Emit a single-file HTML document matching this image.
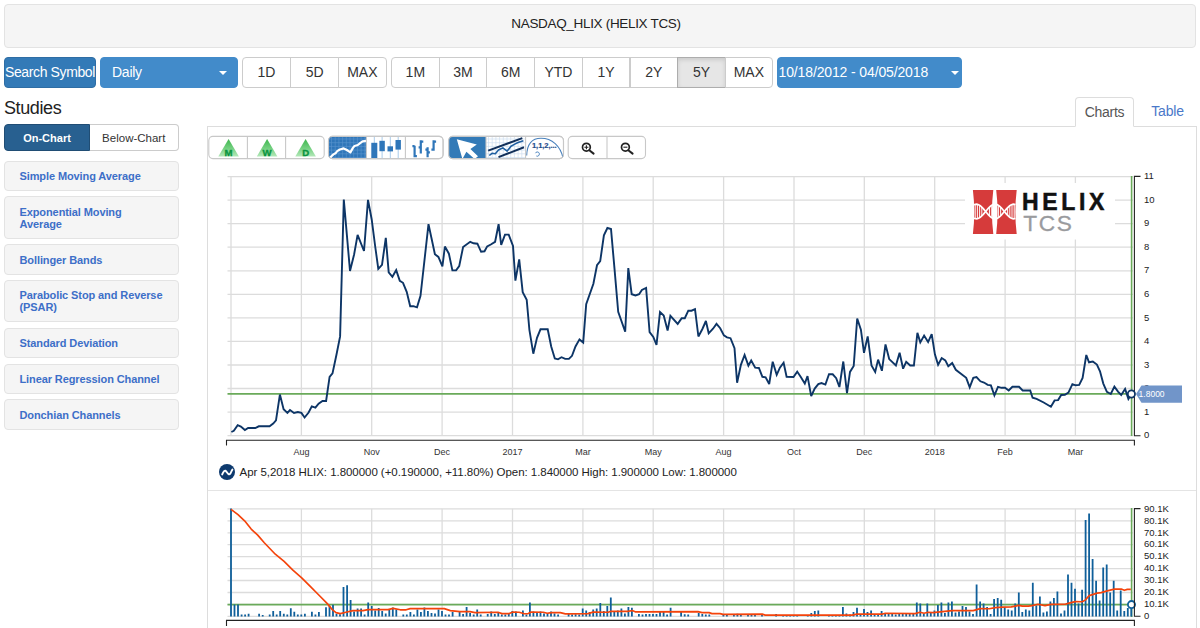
<!DOCTYPE html>
<html><head><meta charset="utf-8">
<style>
*{box-sizing:border-box}
html,body{margin:0;padding:0}
body{width:1200px;height:628px;overflow:hidden;background:#fff;font-family:"Liberation Sans",sans-serif;color:#333;position:relative;font-size:14px}
.abs{position:absolute}
.title{left:4px;top:4px;width:1192px;height:44px;background:#f5f5f5;border:1px solid #e3e3e3;border-radius:4px;text-align:center;line-height:37px;font-size:13.5px;letter-spacing:-0.32px;color:#222;padding-right:8px}
.btn{position:absolute;top:57px;height:31px;line-height:29px;font-size:14px;text-align:center;border:1px solid #ccc;background:#fff;color:#333}
.bl{background:#337ab7;border-color:#2e6da4;color:#fff;border-radius:4px}
.dd{background:#428bca;border-color:#428bca;color:#fff;border-radius:4px;text-align:left;padding-left:11px}
.caret{position:absolute;width:0;height:0;border-left:4px solid transparent;border-right:4px solid transparent;border-top:4px solid #fff}
h2{position:absolute;margin:0;left:4px;top:97px;font-size:18px;letter-spacing:-0.4px;font-weight:normal;color:#222;line-height:22px}
.study{position:absolute;left:4px;width:175px;height:30.8px;background:#f5f5f5;border:1px solid #e3e3e3;border-radius:4px;color:#3d6fc8;font-size:11px;font-weight:bold;padding:9.5px 0 0 14.5px;line-height:11.8px;letter-spacing:-0.1px}
.study.two{height:42.6px}
.tgl{position:absolute;top:123.5px;height:27.5px;line-height:26px;font-size:11px;text-align:center}
.panel{left:207px;top:126px;width:990px;height:520px;border:1px solid #ddd;border-radius:0}
.tab{position:absolute;top:97px;height:30px;line-height:28px;font-size:14px;text-align:center}
.tb{position:absolute;top:136.3px;height:22.4px;border:1px solid #ccc;background:#fff;overflow:hidden}
</style></head><body>
<div class="abs title">NASDAQ_HLIX (HELIX TCS)</div>

<div class="btn bl" style="left:4px;width:92px;font-size:14px;white-space:nowrap;overflow:hidden;padding:0;letter-spacing:-0.38px">Search Symbol</div>
<div class="btn dd" style="left:100px;width:138px;font-size:14px;letter-spacing:-0.26px">Daily<span class="caret" style="right:10px;top:13px"></span></div>

<div class="btn" style="left:241.8px;width:49.2px;border-radius:4px 0 0 4px">1D</div>
<div class="btn" style="left:290px;width:49.2px">5D</div>
<div class="btn" style="left:338.2px;width:48.4px;border-radius:0 4px 4px 0">MAX</div>

<div class="btn" style="left:391px;width:48.7px;border-radius:4px 0 0 4px">1M</div>
<div class="btn" style="left:438.7px;width:48.7px">3M</div>
<div class="btn" style="left:486.4px;width:48.7px">6M</div>
<div class="btn" style="left:534.1px;width:48.7px">YTD</div>
<div class="btn" style="left:581.8px;width:48.7px">1Y</div>
<div class="btn" style="left:629.5px;width:48.7px">2Y</div>
<div class="btn" style="left:677.2px;width:48.7px;background:#e6e6e6;border-color:#adadad;box-shadow:inset 0 2px 4px rgba(0,0,0,.12)">5Y</div>
<div class="btn" style="left:724.9px;width:47.9px;border-radius:0 4px 4px 0">MAX</div>
<div class="btn dd" style="left:777px;width:185px;padding-left:0.5px;letter-spacing:-0.13px">10/18/2012 - 04/05/2018<span class="caret" style="right:2px;top:13px"></span></div>

<h2>Studies</h2>
<div class="tgl" style="left:4px;width:86px;background:#286090;border:1px solid #204d74;border-radius:4px 0 0 4px;color:#fff;font-weight:bold">On-Chart</div>
<div class="tgl" style="left:90px;width:88.5px;background:#fff;border:1px solid #ccc;border-left:0;border-radius:0 4px 4px 0;color:#333;font-size:11.5px">Below-Chart</div>

<div class="study" style="top:160.5px">Simple Moving Average</div>
<div class="study two" style="top:196.3px">Exponential Moving<br>Average</div>
<div class="study" style="top:244.1px">Bollinger Bands</div>
<div class="study two" style="top:279.9px">Parabolic Stop and Reverse<br>(PSAR)</div>
<div class="study" style="top:327.7px">Standard Deviation</div>
<div class="study" style="top:363.5px">Linear Regression Channel</div>
<div class="study" style="top:399.3px">Donchian Channels</div>

<div class="abs panel"></div>
<div class="tab" style="left:1075px;width:59px;border:1px solid #ddd;border-bottom:1px solid #fff;border-radius:4px 4px 0 0;background:#fff;color:#555;letter-spacing:-0.28px">Charts</div>
<div class="tab" style="left:1138px;width:59px;color:#4a78c9;letter-spacing:-0.2px">Table</div>
<div class="abs" style="left:208px;top:490px;width:988px;height:1px;background:#e4e4e4"></div>

<svg class="abs" style="left:0;top:0" width="1200" height="628" viewBox="0 0 1200 628" font-family="Liberation Sans, sans-serif">
<defs><linearGradient id="tg" x1="0" y1="0" x2="0" y2="1"><stop offset="0" stop-color="#3db54d"/><stop offset=".55" stop-color="#76d182"/><stop offset="1" stop-color="#b4e8ba"/></linearGradient>
<clipPath id="c2"><rect x="328.5" y="136.4" width="114.6" height="22.2" rx="4"/></clipPath>
<clipPath id="c3"><rect x="448.7" y="136.4" width="114.8" height="22.2" rx="4"/></clipPath></defs>
<rect x="208.8" y="136.4" width="115.4" height="22.2" rx="4" fill="#fff" stroke="#c8c8c8" stroke-width="1.1"/>
<path d="M228.6 138.9L238.9 156.6H218.3Z" fill="url(#tg)"/>
<text x="228.6" y="156" font-size="9.6" font-weight="bold" fill="#0a9440" stroke="#0a9440" stroke-width=".35" text-anchor="middle">M</text>
<path d="M267.1 138.9L277.4 156.6H256.8Z" fill="url(#tg)"/>
<text x="267.1" y="156" font-size="9.6" font-weight="bold" fill="#0a9440" stroke="#0a9440" stroke-width=".35" text-anchor="middle">W</text>
<path d="M305.6 138.9L315.9 156.6H295.3Z" fill="url(#tg)"/>
<text x="305.6" y="156" font-size="9.6" font-weight="bold" fill="#0a9440" stroke="#0a9440" stroke-width=".35" text-anchor="middle">D</text>
<path d="M247.4 136.4V158.6M285.6 136.4V158.6" stroke="#c8c8c8" stroke-width="1.1"/>
<rect x="328.5" y="136.4" width="114.6" height="22.2" rx="4" fill="#fff" stroke="#c8c8c8" stroke-width="1.1"/>
<g clip-path="url(#c2)">
<rect x="328.5" y="136.4" width="37.9" height="22.2" fill="#2f76b9"/>
<path d="M331.5 136.4V158.6M335.2 136.4V158.6M338.9 136.4V158.6M342.6 136.4V158.6M346.3 136.4V158.6M350 136.4V158.6M353.7 136.4V158.6M357.4 136.4V158.6M361.1 136.4V158.6M364.8 136.4V158.6M328.5 139H366.4M328.5 142.7H366.4M328.5 146.4H366.4M328.5 150.1H366.4M328.5 153.8H366.4M328.5 157.5H366.4" stroke="#5a95cf" stroke-width=".6" fill="none"/>
<polyline points="329.8,158.4 331.2,156.5 333.4,154.4 335.5,153.3 337.2,151.1 339.9,149.5 343.7,148.4 346.9,150 350.4,152.4 352.9,147.9 354.5,146 357.8,145 360.5,142.8 362.6,141.4 366.4,140.8" fill="none" stroke="#fff" stroke-width="2.2" stroke-linejoin="round"/>
<path d="M374.3 136.4V158.6M382.1 136.4V158.6M390.3 136.4V158.6M398.2 136.4V158.6" stroke="#a9cbea" stroke-width="1"/>
<rect x="371.3" y="142.8" width="6" height="16" fill="#2f76b9"/><rect x="379.4" y="140.8" width="5.4" height="10.4" fill="#2f76b9"/><rect x="387.5" y="146.3" width="5.5" height="5.1" fill="#2f76b9"/><rect x="395.5" y="140" width="5.4" height="9.6" fill="#2f76b9"/>
<path d="M414.6 145.7V157.2M412.4 146.2H414.6M414.6 156.2H416.9M420.8 140.3V153.4M418.6 147.3H420.8M420.8 141.6H423.3M427.6 147.3V157.2M425.4 149.6H427.6M427.6 152.3H429.9M433.6 140.3V150.7M431.4 149.6H433.6M433.6 141.6H436.1" stroke="#2f76b9" stroke-width="2.2" fill="none"/>
</g>
<path d="M366.4 136.4V158.6M405.4 136.4V158.6" stroke="#c8c8c8" stroke-width="1.1"/>
<rect x="328.5" y="136.4" width="114.6" height="22.2" rx="4" fill="none" stroke="#c8c8c8" stroke-width="1.1"/>
<rect x="448.7" y="136.4" width="114.8" height="22.2" rx="4" fill="#fff" stroke="#c8c8c8" stroke-width="1.1"/>
<g clip-path="url(#c3)">
<rect x="448.7" y="136.4" width="37.3" height="22.2" fill="#337ab7"/>
<path d="M456.8 139.2L476.8 144.6L470.4 149L478 156.2L474.6 159L466.4 151.7L462.4 159Z" fill="#fff"/>
<path d="M488.5 136.4V158.6M492.2 136.4V158.6M495.9 136.4V158.6M499.6 136.4V158.6M503.3 136.4V158.6M507 136.4V158.6M510.7 136.4V158.6M514.4 136.4V158.6M518.1 136.4V158.6M521.8 136.4V158.6M486 139H525.6M486 142.7H525.6M486 146.4H525.6M486 150.1H525.6M486 153.8H525.6M486 157.5H525.6" stroke="#cfe0f1" stroke-width=".7" fill="none"/>
<polyline points="489.3,155.5 492,153.3 495.3,153.8 498.5,150 502.8,147.9 507.2,151.1 511,146.3 514.8,144.1 518,142.5 523.4,140.8" fill="none" stroke="#1f5fa0" stroke-width="1.6" stroke-linejoin="round"/>
<path d="M488.2 150.6L522.3 138.1M498.5 157.1L524 147.3" stroke="#12305a" stroke-width="2" fill="none"/>
<path d="M526.7 155.5C527 146 531 138.3 541 138.3C552 138.3 560.5 146 563 158" fill="none" stroke="#4a82bd" stroke-width="1.1"/>
<path d="M535.5 153.2C535.8 151.6 538.8 151.4 539.3 153.4C539.8 155.6 537.6 156.8 536.4 156" fill="none" stroke="#4a82bd" stroke-width="1"/>
<text x="532" y="148.2" font-size="7.6" font-weight="bold" fill="#1f4e8c" stroke="#1f4e8c" stroke-width=".2" letter-spacing="-0.1">1,1,2,...</text>
</g>
<path d="M486 136.4V158.6M525.6 136.4V158.6" stroke="#c8c8c8" stroke-width="1.1"/>
<rect x="448.7" y="136.4" width="114.8" height="22.2" rx="4" fill="none" stroke="#c8c8c8" stroke-width="1.1"/>
<rect x="568.2" y="136.4" width="77.3" height="22.2" rx="4" fill="#fff" stroke="#c8c8c8" stroke-width="1.1"/>
<path d="M607 136.4V158.6" stroke="#c8c8c8" stroke-width="1.1"/>
<circle cx="586.4" cy="147.2" r="3.9" fill="none" stroke="#222" stroke-width="1.7"/>
<path d="M589.3 150.2L593.6 153.6" stroke="#222" stroke-width="2" stroke-linecap="round"/>
<path d="M584.4 147.2H588.4M586.4 145.2V149.2" stroke="#222" stroke-width="1.1"/>
<circle cx="625.4" cy="147.2" r="3.9" fill="none" stroke="#222" stroke-width="1.7"/>
<path d="M628.3 150.2L632.6 153.6" stroke="#222" stroke-width="2" stroke-linecap="round"/>
<path d="M623.4 147.2H627.4" stroke="#222" stroke-width="1.1"/>
</svg>
<svg class="abs" style="left:0;top:0" width="1200" height="628" viewBox="0 0 1200 628" font-family="Liberation Sans, sans-serif">
<g stroke="#dcdcdc" stroke-width="1.3" fill="none">
<path d="M227.5 435.6H1133"/>
<path d="M227.5 412.1H1133"/>
<path d="M227.5 388.5H1133"/>
<path d="M227.5 365.0H1133"/>
<path d="M227.5 341.4H1133"/>
<path d="M227.5 317.9H1133"/>
<path d="M227.5 294.3H1133"/>
<path d="M227.5 270.8H1133"/>
<path d="M227.5 247.2H1133"/>
<path d="M227.5 223.7H1133"/>
<path d="M227.5 200.1H1133"/>
<path d="M227.5 176.6H1133"/>
<path d="M231.0 176.5V435.6"/>
<path d="M301.4 176.5V435.6"/>
<path d="M371.7 176.5V435.6"/>
<path d="M442.1 176.5V435.6"/>
<path d="M512.5 176.5V435.6"/>
<path d="M582.9 176.5V435.6"/>
<path d="M653.2 176.5V435.6"/>
<path d="M723.6 176.5V435.6"/>
<path d="M794.0 176.5V435.6"/>
<path d="M864.3 176.5V435.6"/>
<path d="M934.7 176.5V435.6"/>
<path d="M1005.1 176.5V435.6"/>
<path d="M1075.4 176.5V435.6"/>
</g>
<rect x="965" y="183" width="150" height="56.5" fill="#fff"/>
<path d="M972.9 190H993.3Q990.6 212 993.3 234H972.9Q975.6 212 972.9 190Z" fill="#d63b3b"/>
<path d="M996.2 190H1016.7Q1014 212 1016.7 234H996.2Q998.9 212 996.2 190Z" fill="#d63b3b"/>
<path d="M975.2 204.3V218.7M977.4 204.3V218.7M979.6 205.3V217.7M981.8 207.1V215.9M989.5 207.1V215.9M991.7 205.3V217.7M994.0 204.3V218.7M996.2 204.3V218.7M998.4 205.4V217.6M1000.6 207.2V215.8M1007.6 207.7V215.3M1009.8 205.7V217.3M1012.0 204.5V218.5M1014.2 204.2V218.8" stroke="#fff" stroke-width="1.1" fill="none" opacity=".9"/>
<polyline points="973.5,205.0 974.5,204.5 975.5,204.3 976.5,204.2 977.5,204.3 978.5,204.7 979.5,205.2 980.5,205.9 981.5,206.8 982.5,207.8 983.5,208.9 984.5,210.1 985.5,211.3 986.5,212.5 987.5,213.7 988.5,214.9 989.5,215.9 990.5,216.8 991.5,217.6 992.5,218.2 993.5,218.6 994.5,218.8 995.5,218.8 996.5,218.6 997.5,218.2 998.5,217.6 999.5,216.8 1000.5,215.9 1001.5,214.9 1002.5,213.7 1003.5,212.5 1004.5,211.3 1005.5,210.1 1006.5,208.9 1007.5,207.8 1008.5,206.8 1009.5,205.9 1010.5,205.2 1011.5,204.7 1012.5,204.3 1013.5,204.2 1014.5,204.3 1015.5,204.5" fill="none" stroke="#fff" stroke-width="1.7"/>
<polyline points="973.5,218.0 974.5,218.5 975.5,218.7 976.5,218.8 977.5,218.7 978.5,218.3 979.5,217.8 980.5,217.1 981.5,216.2 982.5,215.2 983.5,214.1 984.5,212.9 985.5,211.7 986.5,210.5 987.5,209.3 988.5,208.1 989.5,207.1 990.5,206.2 991.5,205.4 992.5,204.8 993.5,204.4 994.5,204.2 995.5,204.2 996.5,204.4 997.5,204.8 998.5,205.4 999.5,206.2 1000.5,207.1 1001.5,208.1 1002.5,209.3 1003.5,210.5 1004.5,211.7 1005.5,212.9 1006.5,214.1 1007.5,215.2 1008.5,216.2 1009.5,217.1 1010.5,217.8 1011.5,218.3 1012.5,218.7 1013.5,218.8 1014.5,218.7 1015.5,218.5" fill="none" stroke="#fff" stroke-width="1.7"/>
<text x="1021.9" y="210" font-size="23" font-weight="bold" fill="#111" stroke="#111" stroke-width=".5" letter-spacing="3.7">HELIX</text>
<text x="1023.2" y="230.6" font-size="22.7" fill="#9a9b9e" stroke="#9a9b9e" stroke-width=".3" letter-spacing="1.6">TCS</text>
<path d="M227.5 393.9H1133" stroke="#6aaa5a" stroke-width="1.6" fill="none"/>
<path d="M1131.6 176V436" stroke="#6aaa5a" stroke-width="1.6" fill="none"/>
<path d="M226.5 445.5V440.2H1134.4V445.5" stroke="#222" stroke-width="1.1" fill="none"/>
<path d="M1140.5 176.4H1134.4V435.8H1140.5" stroke="#222" stroke-width="1.1" fill="none"/>
<g font-size="9.5" fill="#222">
<text x="1144" y="438.3">0</text>
<text x="1144" y="414.8">1</text>
<text x="1144" y="391.2">2</text>
<text x="1144" y="367.7">3</text>
<text x="1144" y="344.1">4</text>
<text x="1144" y="320.6">5</text>
<text x="1144" y="297.0">6</text>
<text x="1144" y="273.4">7</text>
<text x="1144" y="249.9">8</text>
<text x="1144" y="226.3">9</text>
<text x="1144" y="202.8">10</text>
<text x="1144" y="179.2">11</text>
</g>
<g font-size="9" fill="#333" text-anchor="middle">
<text x="301.4" y="455.1">Aug</text>
<text x="371.7" y="455.1">Nov</text>
<text x="442.1" y="455.1">Dec</text>
<text x="512.5" y="455.1">2017</text>
<text x="582.9" y="455.1">Mar</text>
<text x="653.2" y="455.1">May</text>
<text x="723.6" y="455.1">Aug</text>
<text x="794.0" y="455.1">Oct</text>
<text x="864.3" y="455.1">Dec</text>
<text x="934.7" y="455.1">2018</text>
<text x="1005.1" y="455.1">Feb</text>
<text x="1075.4" y="455.1">Mar</text>
</g>
<polyline fill="none" stroke="#0d3566" stroke-width="1.9" stroke-linejoin="miter" stroke-miterlimit="3" points="231.4,432.0 233.8,430.8 237.7,425.2 240.9,426.5 244.9,430 248.1,428 255.3,428 258.8,426.3 269.6,426.3 273.2,423.6 276,420.4 279.9,394.6 283.6,409.3 287.4,412.9 290,410 294,412.9 297.9,412 301.4,412.9 304.6,417.5 308.6,412.5 311.8,406.4 315.4,407.7 318.6,403.7 322.5,401 326.1,401 329.6,376.9 332.5,373.4 336.4,355 340.1,336.4 343.8,199.6 350,270.9 354.1,254.5 357.6,234.9 364,251 368,199.9 371.7,219.5 375.2,246.5 378.3,268.8 382,264.8 385.8,237.8 388.7,272.3 392.4,276.8 396.2,270.1 399.8,280.8 403,282.8 406.7,291.8 410.2,306.2 413.4,306.2 417,307.3 420.5,295.8 428.5,224.2 431.4,237.8 434.9,254.2 438.4,256.9 442.4,266.4 444.9,246.5 448.9,253.7 452.4,270.4 456.1,270.4 459.2,266.1 463.1,247 470.2,241.8 473.6,243.3 477.4,243.7 481.1,251.8 484.5,251.3 487.2,246.4 490.8,244.5 495.1,241.8 498.6,224.2 501.2,244.9 505,234.6 508.7,234.6 513,246 515.4,280.6 519.2,259.3 522.7,292.2 526.7,299.7 529.4,329.8 533.3,353.7 537,337.8 540.5,329.3 547.7,329.3 551.2,346.5 554.8,358.5 558,359.3 561.5,357.2 565.2,358.9 568.9,358.9 572,355.8 575.5,346.5 579.5,339.4 583.2,342.5 586.2,304.1 593.4,283.8 597,265.2 600.2,261.2 603.9,235.4 607.4,228 611,229 614.6,269.9 618.2,311.8 625.2,331.7 628.3,268.1 631.7,294.2 635.5,295.4 639.1,294.2 641.9,289.9 646.1,287.9 649.6,332.2 653.3,337 656.5,344.9 660,312 663.7,315.5 667.6,330.6 670.4,315.8 677.7,323.9 681.7,318.2 684.8,318.2 688.3,310.7 691.5,310.7 695,309.1 698.4,336.5 702.4,329 705.9,321 708.7,333.3 713,328.7 716.5,323.9 720.2,328.2 723.9,335.4 727,337.3 730.5,338.2 734.5,348.1 737.1,382.7 740.9,364.8 744.6,355 748.4,365.6 751.2,360.5 755.2,367.7 758.9,368 762.4,376.8 765.6,377.3 769.2,384 772.7,361.7 776.7,374.9 779.9,367.7 783.6,362.8 786.6,376.8 793.5,377 797.2,371.6 800.8,377.1 804.8,383.5 807.5,376.2 811.2,396.2 814.7,388.6 818.3,384.1 821.5,383 825.4,384.6 829,374.3 832.7,374.3 836.2,378.2 839.4,387 843.3,361.5 847,393.1 850,371.9 853.7,366 857.2,318.5 860.9,329.7 864,352.8 867.7,336.4 871.5,365.5 875.2,371.9 878.1,359.6 881.9,370.8 885.5,344.5 889.2,359.1 895.9,365.5 899.6,352.8 903.1,368.7 906.2,361.8 910.2,365.5 913.9,365.5 917.4,332.9 920.3,342.4 924.1,335.6 928.1,342.1 931.7,334.1 934.9,354.4 938.1,364.7 941.7,358 945.3,360.4 948.3,366.3 952.2,363 955.8,369.8 966.2,377.8 969.7,387.3 973.3,377.8 976.5,377 980.4,381.3 984,382.5 987.7,384.9 990.9,385.4 994.4,395.3 998,386.8 1001.5,387.8 1005,387.8 1008.7,390.5 1012.4,386.8 1019,386.8 1022.7,390.5 1030.2,390.5 1032.6,397.7 1036.6,398.8 1043.7,402.5 1050.9,406.8 1054.6,400.4 1058.1,400.1 1061.2,395 1064.9,394.8 1068.4,392.6 1072.4,384.1 1075.6,385.3 1079.2,384.9 1082.6,378 1086.3,355 1089,362.3 1092.8,361.6 1096.9,364.6 1100,371.3 1103.3,383.6 1106.9,391.9 1110.8,394 1114.4,386.6 1118,391.6 1121.2,394.9 1125.1,389 1128.4,398.9 1131.3,394"/>
<circle cx="1131.4" cy="394" r="3.6" fill="#fff" stroke="#0d3566" stroke-width="1.8"/>
<path d="M1136 394L1141.5 385.4H1182V402.7H1141.5Z" fill="#7195c9"/>
<text x="1138.6" y="397.2" font-size="8.5" fill="#fff">1.8000</text>
<g stroke="#dcdcdc" stroke-width="1.3" fill="none">
<path d="M227.5 616.4H1133"/>
<path d="M227.5 604.4H1133"/>
<path d="M227.5 592.5H1133"/>
<path d="M227.5 580.5H1133"/>
<path d="M227.5 568.6H1133"/>
<path d="M227.5 556.6H1133"/>
<path d="M227.5 544.7H1133"/>
<path d="M227.5 532.8H1133"/>
<path d="M227.5 520.8H1133"/>
<path d="M227.5 508.8H1133"/>
<path d="M231.0 508.7V616.4"/>
<path d="M301.4 508.7V616.4"/>
<path d="M371.7 508.7V616.4"/>
<path d="M442.1 508.7V616.4"/>
<path d="M512.5 508.7V616.4"/>
<path d="M582.9 508.7V616.4"/>
<path d="M653.2 508.7V616.4"/>
<path d="M723.6 508.7V616.4"/>
<path d="M794.0 508.7V616.4"/>
<path d="M864.3 508.7V616.4"/>
<path d="M934.7 508.7V616.4"/>
<path d="M1005.1 508.7V616.4"/>
<path d="M1075.4 508.7V616.4"/>
</g>
<path d="M227.5 604.6H1133" stroke="#6aaa5a" stroke-width="1.6" fill="none"/>
<path d="M1131.6 508V617" stroke="#6aaa5a" stroke-width="1.6" fill="none"/>
<path d="M231.0 616.4V508.4M234.5 616.4V604.4M238.0 616.4V604.4M241.6 616.4V614.5M245.1 616.4V614.5M248.6 616.4V613.8M259.1 616.4V613.8M262.7 616.4V614.9M269.7 616.4V614.5M273.2 616.4V611.1M276.7 616.4V614.5M280.2 616.4V611.1M283.8 616.4V613.8M287.3 616.4V614.5M290.8 616.4V608.3M294.3 616.4V611.8M297.8 616.4V614.5M301.3 616.4V614.5M304.9 616.4V613.8M311.9 616.4V611.8M315.4 616.4V614.5M318.9 616.4V612.0M326.0 616.4V607.3M329.5 616.4V605.8M333.0 616.4V604.8M336.5 616.4V613.8M340.0 616.4V614.2M343.5 616.4V587.0M347.1 616.4V585.3M350.6 616.4V599.9M354.1 616.4V611.4M357.6 616.4V608.4M361.1 616.4V608.4M364.6 616.4V614.6M368.2 616.4V602.4M371.7 616.4V605.9M375.2 616.4V610.4M378.7 616.4V607.9M382.2 616.4V610.9M385.7 616.4V613.4M389.3 616.4V609.9M392.8 616.4V607.4M396.3 616.4V609.4M403.3 616.4V614.6M406.8 616.4V614.6M410.4 616.4V611.9M413.9 616.4V614.6M417.4 616.4V609.4M420.9 616.4V611.9M424.4 616.4V607.4M427.9 616.4V610.9M431.5 616.4V612.9M435.0 616.4V613.6M438.5 616.4V609.4M442.0 616.4V610.9M445.5 616.4V614.6M449.0 616.4V614.6M452.6 616.4V611.9M459.6 616.4V611.9M463.1 616.4V613.9M466.6 616.4V606.9M470.1 616.4V612.9M473.7 616.4V614.6M477.2 616.4V609.4M480.7 616.4V614.6M487.7 616.4V613.9M491.2 616.4V611.4M494.8 616.4V613.9M498.3 616.4V612.9M501.8 616.4V614.6M505.3 616.4V614.6M508.8 616.4V613.9M512.3 616.4V610.9M515.9 616.4V611.4M522.9 616.4V610.4M526.4 616.4V614.6M529.9 616.4V602.4M533.4 616.4V611.4M537.0 616.4V612.4M540.5 616.4V611.4M544.0 616.4V613.4M547.5 616.4V612.9M551.0 616.4V611.4M554.5 616.4V613.4M558.1 616.4V614.6M568.6 616.4V613.9M572.1 616.4V614.6M575.6 616.4V614.2M579.2 616.4V614.6M582.7 616.4V608.4M586.2 616.4V610.4M589.7 616.4V611.9M593.2 616.4V609.4M596.7 616.4V608.4M600.3 616.4V602.9M603.8 616.4V610.9M607.3 616.4V605.9M610.8 616.4V597.6M614.3 616.4V611.9M617.8 616.4V610.4M621.4 616.4V608.4M624.9 616.4V613.4M628.4 616.4V606.9M631.9 616.4V607.7M638.9 616.4V613.9M642.5 616.4V614.6M646.0 616.4V613.9M649.5 616.4V613.9M653.0 616.4V613.9M656.5 616.4V613.9M660.0 616.4V611.9M663.6 616.4V611.9M667.1 616.4V614.6M670.6 616.4V607.7M681.1 616.4V611.9M684.7 616.4V614.2M688.2 616.4V614.6M698.7 616.4V612.9M702.3 616.4V613.9M705.8 616.4V614.6M709.3 616.4V614.6M723.4 616.4V614.8M726.9 616.4V614.8M733.9 616.4V614.8M737.4 616.4V613.8M740.9 616.4V614.8M748.0 616.4V614.8M751.5 616.4V614.8M755.0 616.4V614.8M762.0 616.4V614.8M776.1 616.4V613.9M783.1 616.4V615.2M786.7 616.4V615.2M790.2 616.4V615.2M793.7 616.4V615.2M797.2 616.4V615.2M807.8 616.4V614.9M811.3 616.4V612.9M814.8 616.4V611.1M818.3 616.4V610.4M828.9 616.4V615.1M832.4 616.4V615.1M835.9 616.4V615.1M839.4 616.4V615.1M842.9 616.4V606.9M846.4 616.4V613.6M850.0 616.4V614.6M853.5 616.4V611.9M857.0 616.4V607.7M860.5 616.4V613.9M864.0 616.4V608.9M867.5 616.4V611.9M871.1 616.4V610.4M874.6 616.4V613.9M878.1 616.4V613.9M881.6 616.4V611.1M885.1 616.4V613.9M888.6 616.4V613.9M892.2 616.4V613.9M895.7 616.4V614.6M899.2 616.4V613.9M902.7 616.4V613.9M906.2 616.4V613.9M909.7 616.4V613.9M913.3 616.4V613.9M916.8 616.4V602.4M920.3 616.4V603.4M923.8 616.4V613.9M927.3 616.4V603.4M930.8 616.4V612.9M934.4 616.4V610.4M937.9 616.4V604.9M941.4 616.4V602.4M944.9 616.4V612.9M948.4 616.4V602.4M951.9 616.4V601.4M955.5 616.4V612.4M959.0 616.4V611.4M962.5 616.4V605.9M966.0 616.4V606.9M969.5 616.4V611.4M973.0 616.4V613.9M976.6 616.4V584.4M980.1 616.4V601.4M983.6 616.4V603.4M987.1 616.4V606.9M990.6 616.4V613.9M994.1 616.4V598.9M997.7 616.4V597.9M1001.2 616.4V599.7M1004.7 616.4V606.9M1008.2 616.4V609.4M1011.7 616.4V610.4M1015.2 616.4V603.4M1018.8 616.4V592.4M1022.3 616.4V611.9M1025.8 616.4V609.4M1029.3 616.4V610.4M1032.8 616.4V582.8M1036.3 616.4V605.4M1039.9 616.4V596.4M1043.4 616.4V612.4M1046.9 616.4V611.4M1050.4 616.4V601.4M1053.9 616.4V597.9M1057.4 616.4V591.4M1061.0 616.4V613.4M1064.5 616.4V610.4M1068.0 616.4V574.4M1071.5 616.4V582.8M1075.0 616.4V588.8M1078.5 616.4V603.4M1082.1 616.4V589.8M1085.6 616.4V519.9M1089.1 616.4V513.4M1092.6 616.4V558.9M1096.1 616.4V580.8M1099.6 616.4V600.4M1103.2 616.4V567.4M1106.7 616.4V564.4M1110.2 616.4V592.4M1113.7 616.4V580.8M1117.2 616.4V610.4M1120.7 616.4V590.4M1124.3 616.4V610.9M1127.8 616.4V607.9M1131.3 616.4V604.4" stroke="#0f5f9a" stroke-width="1.8" fill="none"/>
<polyline fill="none" stroke="#f4430b" stroke-width="1.65" stroke-linejoin="round" points="231,509.3 238,514.6 244.6,520.8 251.2,529.1 257.7,535.1 264.3,542.7 275.3,554.2 284.1,561.4 292.9,570.2 301.7,577.9 310.5,586.7 319.3,595.5 327.3,603.6 332.3,609.6 336,612.6 340.2,613.6 346,612.3 353,610.6 363,610.6 368,609.6 388,609.6 393.2,608.4 400.2,609.8 406.2,609.8 410.2,608.6 444.3,608.6 450.3,610.6 460,611.6 470,611.6 475,612.6 498,612.3 502,613.6 509.2,613.6 513,612.1 519.2,612.3 524.2,613.8 528.2,613.6 531.2,612.1 543.3,612.3 547.3,613.3 551.3,612.6 560.3,612.6 565.3,613.9 588,613.6 593,612.1 608.1,612.3 611.1,611.3 628.2,611.3 632.2,610.6 635.2,611.8 698,611.6 702,612.6 709,612.6 712,613.6 720,613.6 723,614.4 762.2,614.1 765.2,615.1 852,615.1 857,614.1 882.2,614.1 885.3,613.3 915,613.6 920,612.3 924,613.3 928,612.3 933,612.6 952.1,610.6 973.2,610.6 980.2,608.6 989.2,608.8 995.2,607.6 1002.3,607.1 1011.3,606.9 1018.8,605.4 1022.3,606.1 1028.3,606.1 1032,605.6 1038,604.3 1045,605.6 1051,604.4 1065.1,604.3 1069.1,603.1 1075.2,601.6 1082.2,601.8 1085.2,600.1 1089.2,595.6 1097.2,593.1 1101.2,592.6 1107.2,590.9 1114.3,589.1 1121.3,589.1 1124.3,590.3 1127.3,589.4 1130.8,589.4"/>
<circle cx="1131.5" cy="604.6" r="3.6" fill="#fff" stroke="#0f5f9a" stroke-width="1.8"/>
<path d="M226.5 626V620.4H1134.4V626" stroke="#222" stroke-width="1.1" fill="none"/>
<path d="M1140.5 508.6H1134.4V616.2H1140.5" stroke="#222" stroke-width="1.1" fill="none"/>
<g font-size="9.5" fill="#222">
<text x="1144" y="619.1">0</text>
<text x="1144" y="607.1">10.1K</text>
<text x="1144" y="595.2">20.1K</text>
<text x="1144" y="583.2">30.1K</text>
<text x="1144" y="571.3">40.1K</text>
<text x="1144" y="559.4">50.1K</text>
<text x="1144" y="547.4">60.1K</text>
<text x="1144" y="535.5">70.1K</text>
<text x="1144" y="523.5">80.1K</text>
<text x="1144" y="511.5">90.1K</text>
</g>
</svg>
<div class="abs" style="left:218.5px;top:463.8px;width:16.4px;height:16.4px;border-radius:50%;background:#0e3a6e">
<svg width="16.4" height="16.4" viewBox="0 0 16.4 16.4" style="position:absolute;left:0;top:0"><path d="M3.2 10.4C4.6 7 6 5.6 7.4 7.6S10 11.6 11.4 9.4S12.6 6.6 13.4 5.6" fill="none" stroke="#fff" stroke-width="1.9" stroke-linecap="round" stroke-linejoin="round"/></svg></div>
<div class="abs" style="left:239.6px;top:464px;font-size:11.5px;line-height:16px;color:#222;white-space:nowrap;letter-spacing:-0.05px">Apr 5,2018 HLIX: 1.800000 (+0.190000, +11.80%) Open: 1.840000 High: 1.900000 Low: 1.800000</div>
</body></html>
